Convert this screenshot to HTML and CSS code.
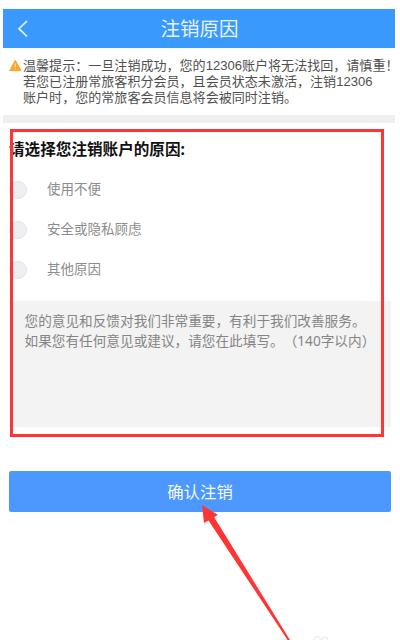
FILE: index.html
```html
<!DOCTYPE html>
<html lang="zh-CN">
<head>
<meta charset="utf-8">
<title>注销原因</title>
<link rel="stylesheet" href="styles.css">
</head>
<body>
<main class="screen">
  <header class="bar">
    <svg class="back" width="12" height="20" viewBox="0 0 12 20"><path d="M10 2L2 9.7L10 17.5"/></svg>
    <h1 class="title">注销原因</h1>
  </header>
  <section class="notice">
    <svg class="warn" width="13" height="13" viewBox="0 0 13 13"><path class="warn-shape" d="M6.3 1.3L12 11.5H.7Z"/><path class="warn-mark" d="M6.3 4.6V8M6.3 9.2V10.2"/></svg>
    <p class="notice-text">温馨提示：一旦注销成功，您的12306账户将无法找回，请慎重！<br>若您已注册常旅客积分会员，且会员状态未激活，注销12306<br>账户时，您的常旅客会员信息将会被同时注销。</p>
  </section>
  <form class="form">
    <h2 class="question">请选择您注销账户的原因:</h2>
    <div class="options">
      <label class="option"><span class="radio"></span>使用不便</label>
      <label class="option"><span class="radio"></span>安全或隐私顾虑</label>
      <label class="option"><span class="radio"></span>其他原因</label>
    </div>
    <div class="feedback">您的意见和反馈对我们非常重要，有利于我们改善服务。<br>如果您有任何意见或建议，请您在此填写。（140字以内）</div>
    <button class="submit" type="button">确认注销</button>
  </form>
  <div class="frame"></div>
  <svg class="arrow" width="92" height="136" viewBox="0 0 92 136"><path d="M0 0L15.8 9.8L12.2 12.2L88 135H85.6L6.5 15.5L2 18Z"/></svg>
  <svg class="mark" width="20" height="6" viewBox="0 0 20 6"><circle cx="5" cy="6" r="3.5"/><circle cx="13" cy="6" r="3"/></svg>
</main>
</body>
</html>
```

FILE: styles.css
```css
* { box-sizing: border-box; }
body {
  margin: 0;
  background: #fff;
  font-family: "Noto Sans", "Noto Sans CJK SC", sans-serif;
  text-spacing-trim: space-all;
}
.screen {
  position: relative;
  width: 400px;
  height: 640px;
  padding: 9px 5px 0 3px;
  overflow: hidden;
}
.bar {
  display: flex;
  align-items: center;
  height: 39px;
  padding-left: 14px;
  background: #3999fd;
}
.back { fill: none; stroke: #e8f4ff; stroke-width: 1.7; }
.title {
  margin: 0 0 0 131.5px;
  color: #e9f3ff;
  font-size: 19.5px;
  font-weight: 400;
  line-height: 39px;
}
.notice {
  display: flex;
  height: 75px;
  padding: 10px 0 0 6px;
  border-bottom: 8px solid #efeff1;
}
.warn { flex: none; margin-top: 1px; }
.warn-shape { fill: #fca82b; stroke: #fca82b; stroke-linejoin: round; }
.warn-mark { fill: none; stroke: #fff2cf; stroke-width: 1; }
.notice-text {
  margin: 0 0 0 1px;
  color: #505050;
  font-family: "Liberation Sans", "Noto Sans CJK SC", sans-serif;
  font-size: 13.05px;
  line-height: 15.8px;
  white-space: nowrap;
}
.form { padding: 15px 4px 0 6px; }
.question {
  margin: 0;
  color: #111;
  font-size: 15.6px;
  font-weight: 700;
  line-height: 22px;
  white-space: nowrap;
}
.options { padding-top: 10px; }
.option {
  display: flex;
  align-items: center;
  gap: 20px;
  height: 40px;
  color: #8c8c8c;
  font-size: 13.5px;
  line-height: 20px;
  padding-bottom: 2px;
}
.radio {
  width: 18px;
  height: 18px;
  margin-top: 2px;
  border: 1px solid #e3e3e6;
  border-radius: 50%;
  background: #efeff3;
}
.feedback {
  height: 126px;
  margin-top: 11px;
  padding: 10px 0 0 15.5px;
  background: #f3f3f3;
  color: #858585;
  font-size: 13.65px;
  line-height: 19.5px;
  white-space: nowrap;
}
.submit {
  display: block;
  width: 382px;
  height: 41px;
  margin-top: 44px;
  padding: 0;
  border: 0;
  border-radius: 2px;
  background: #4c98ff;
  color: #f4f9ff;
  font-family: inherit;
  font-size: 16.4px;
  line-height: 41px;
}
.frame {
  position: absolute;
  left: 10px;
  top: 129px;
  width: 374px;
  height: 308px;
  border: 3px solid #ff3535;
}
.arrow { position: absolute; left: 202px; top: 505px; fill: #ff3535; }
.mark { position: absolute; left: 312px; top: 634px; fill: none; stroke: #e6e6e6; }
```
